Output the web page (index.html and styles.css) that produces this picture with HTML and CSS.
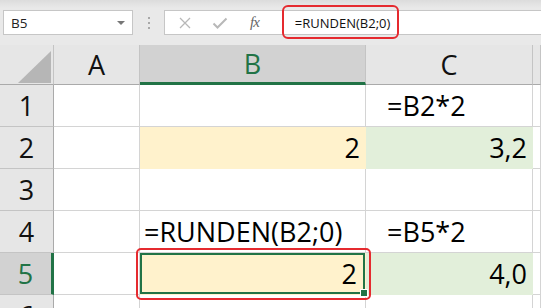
FILE: index.html
```html
<!DOCTYPE html>
<html lang="de">
<head>
    <meta charset="UTF-8">
    <meta name="viewport" content="width=device-width, initial-scale=1.0">
    <title>RUNDEN</title>
    <link rel="stylesheet" href="styles.css">
</head>
<body>

<div class="bar">
    <div class="namebox">
        <span>B5</span>
        <span class="arrow"></span>
    </div>
    <div class="dots"><i></i><i></i><i></i></div>
    <div class="formula">
        <svg class="icon" width="14" height="12" viewBox="0 0 14 12"><path d="M2 1 L12 11 M12 1 L2 11" stroke="#b8b8b8" stroke-width="1.3" fill="none"/></svg>
        <svg class="icon" width="16" height="12" viewBox="0 0 16 12"><path d="M1.5 6.5 L5.5 10.5 L14.5 1.5" stroke="#b8b8b8" stroke-width="2" fill="none"/></svg>
        <span class="fx">fx</span>
        <span class="ftext">=RUNDEN(B2;0)</span>
    </div>
</div>

<div class="sheet">
    <div class="hd corner"><span class="tri"></span></div>
    <div class="hd">A</div>
    <div class="hd active">B</div>
    <div class="hd">C</div>
    <div class="hd"></div>

    <div class="rh">1</div>
    <div class="c"></div>
    <div class="c"></div>
    <div class="c txt">=B2*2</div>
    <div class="c"></div>

    <div class="rh">2</div>
    <div class="c"></div>
    <div class="c num yellow">2</div>
    <div class="c num green">3,2</div>
    <div class="c"></div>

    <div class="rh">3</div>
    <div class="c"></div>
    <div class="c"></div>
    <div class="c"></div>
    <div class="c"></div>

    <div class="rh">4</div>
    <div class="c"></div>
    <div class="c left">=RUNDEN(B2;0)</div>
    <div class="c txt">=B5*2</div>
    <div class="c"></div>

    <div class="rh active">5</div>
    <div class="c"></div>
    <div class="c num yellow sel">2</div>
    <div class="c num green">4,0</div>
    <div class="c"></div>

    <div class="rh">6</div>
    <div class="c"></div>
    <div class="c"></div>
    <div class="c"></div>
    <div class="c"></div>
</div>

</body>
</html>
```

FILE: styles.css
```css
body {
    margin: 0;
    font-family: "Open Sans", "Noto Sans", sans-serif;
    background: #fff;
    overflow: hidden;
}

/* Formelleiste */
.bar {
    height: 45px;
    box-sizing: border-box;
    padding: 10px 0 0 3px;
    display: flex;
    align-items: flex-start;
    background: linear-gradient(#dcdcdc, #e9e9e9 8px, #e9e9e9);
}
.namebox {
    width: 130px;
    height: 25px;
    box-sizing: border-box;
    border: 1px solid #c6c6c6;
    background: #fff;
    display: flex;
    align-items: center;
    justify-content: space-between;
    padding: 0 7px 0 7px;
    font-size: 13.5px;
    color: #222;
}
.arrow {
    width: 0;
    height: 0;
    border-left: 4px solid transparent;
    border-right: 4px solid transparent;
    border-top: 4px solid #777;
}
.dots {
    width: 31px;
    height: 25px;
    display: flex;
    flex-direction: column;
    align-items: center;
    justify-content: center;
    gap: 3px;
}
.dots i {
    width: 2px;
    height: 2px;
    background: #a8a8a8;
}
.formula {
    flex: 1;
    height: 25px;
    box-sizing: border-box;
    border: 1px solid #c6c6c6;
    border-right: none;
    background: #fff;
    display: flex;
    align-items: center;
    padding-left: 13px;
}
.icon {
    margin-right: 20px;
}
.fx {
    font-family: "Liberation Serif", serif;
    font-style: italic;
    font-size: 15px;
    color: #666;
    margin-left: 2px;
    letter-spacing: -1px;
}
.ftext {
    position: relative;
    margin-left: 36px;
    font-size: 13px;
    color: #111;
}
.ftext::after {
    content: "";
    position: absolute;
    left: -13px;
    right: -9px;
    top: -9px;
    bottom: -7px;
    border: 2px solid #e52a2f;
    border-radius: 6px;
}

/* Tabelle */
.sheet {
    display: grid;
    grid-template-columns: 54px 86px 226px 167px 1fr;
    grid-template-rows: 40px repeat(5, 42px) 42px;
    font-size: 27px;
    color: #000;
}
.hd {
    background: #e6e6e6;
    border-right: 1px solid #c4c4c4;
    border-bottom: 1px solid #aaa;
    box-sizing: border-box;
    display: flex;
    align-items: center;
    justify-content: center;
    color: #111;
}
.hd.active {
    background: #d2d2d2;
    color: #217346;
    border-bottom: 3px solid #217346;
}
.corner {
    position: relative;
}
.tri {
    position: absolute;
    left: 18px;
    top: 6px;
    width: 33px;
    height: 32px;
    background: #b6b6b6;
    clip-path: polygon(100% 0, 100% 100%, 0 100%);
}
.rh {
    background: #e6e6e6;
    border-right: 1px solid #aaa;
    border-bottom: 1px solid #c4c4c4;
    box-sizing: border-box;
    display: flex;
    align-items: center;
    justify-content: center;
    color: #111;
}
.rh.active {
    background: #d2d2d2;
    color: #217346;
    border-right: 3px solid #217346;
}
.c {
    border-right: 1px solid #d4d4d4;
    border-bottom: 1px solid #d4d4d4;
    box-sizing: border-box;
    display: flex;
    align-items: center;
    white-space: nowrap;
}
.left {
    padding-left: 4px;
    overflow: visible;
}
.txt {
    padding-left: 21px;
}
.num {
    justify-content: flex-end;
    padding-right: 5px;
}
.yellow {
    background: #fff2cc;
    border-color: #fff2cc;
}
.green {
    background: #e2efda;
    border-color: #e2efda;
}
.sel {
    position: relative;
    box-shadow: inset 0 0 0 2px #217346;
    padding-right: 8px;
}
.sel::before {
    content: "";
    position: absolute;
    right: -3px;
    bottom: -3px;
    width: 6px;
    height: 6px;
    background: #217346;
    border: 1px solid #fff;
}
.sel::after {
    content: "";
    position: absolute;
    left: -4px;
    right: -6px;
    top: -5px;
    bottom: -6px;
    border: 2px solid #e52a2f;
    border-radius: 5px;
}
```
